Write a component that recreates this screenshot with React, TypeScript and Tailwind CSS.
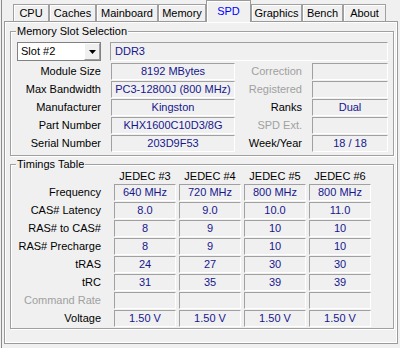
import type React from "react"

type Tab = { label: string; w: string; active?: boolean }

const tabs: Tab[] = [
  { label: "CPU", w: "w-[36px]" },
  { label: "Caches", w: "w-[47px]" },
  { label: "Mainboard", w: "w-[62px]" },
  { label: "Memory", w: "w-[48px]" },
  { label: "SPD", w: "w-[45px]", active: true },
  { label: "Graphics", w: "w-[51px]" },
  { label: "Bench", w: "w-[41px]" },
  { label: "About", w: "w-[43px]" },
]

type SlotRow = { label: string; value: string; side: string; sideOn: boolean; sideValue: string }

const slotRows: SlotRow[] = [
  { label: "Module Size", value: "8192 MBytes", side: "Correction", sideOn: false, sideValue: "" },
  { label: "Max Bandwidth", value: "PC3-12800J (800 MHz)", side: "Registered", sideOn: false, sideValue: "" },
  { label: "Manufacturer", value: "Kingston", side: "Ranks", sideOn: true, sideValue: "Dual" },
  { label: "Part Number", value: "KHX1600C10D3/8G", side: "SPD Ext.", sideOn: false, sideValue: "" },
  { label: "Serial Number", value: "203D9F53", side: "Week/Year", sideOn: true, sideValue: "18 / 18" },
]

const jedec = ["JEDEC #3", "JEDEC #4", "JEDEC #5", "JEDEC #6"]

const timings: { label: string; on: boolean; values: string[] }[] = [
  { label: "Frequency", on: true, values: ["640 MHz", "720 MHz", "800 MHz", "800 MHz"] },
  { label: "CAS# Latency", on: true, values: ["8.0", "9.0", "10.0", "11.0"] },
  { label: "RAS# to CAS#", on: true, values: ["8", "9", "10", "10"] },
  { label: "RAS# Precharge", on: true, values: ["8", "9", "10", "10"] },
  { label: "tRAS", on: true, values: ["24", "27", "30", "30"] },
  { label: "tRC", on: true, values: ["31", "35", "39", "39"] },
  { label: "Command Rate", on: false, values: ["", "", "", ""] },
  { label: "Voltage", on: true, values: ["1.50 V", "1.50 V", "1.50 V", "1.50 V"] },
]

// sunken read-only field, CPU-Z style
function Field({ children, className = "" }: { children?: React.ReactNode; className?: string }) {
  return (
    <div
      className={`h-[17px] border border-t-[#a0a0a0] border-l-[#a0a0a0] border-b-white border-r-white text-center leading-[15px] text-[#16168e] whitespace-nowrap overflow-hidden ${className}`}
    >
      {children}
    </div>
  )
}

function Group({ title, className = "", children }: { title: string; className?: string; children: React.ReactNode }) {
  return (
    <fieldset
      className={`w-[384px] border border-[#a0a0a0] shadow-[inset_1px_1px_0_#fff,1px_1px_0_#fff] pl-[6px] ${className}`}
    >
      <legend className="-ml-px px-px leading-[11px] bg-[#f0f0f0]">{title}</legend>
      {children}
    </fieldset>
  )
}

export default function App() {
  return (
    <div className="w-[400px] h-[348px] overflow-hidden bg-[#f0f0f0] font-['Liberation_Sans',Arial,sans-serif] text-[11px] text-black">
      <div className="h-full ml-px border-l border-[#8c8c8c] pl-[2px]">
        {/* Tabs */}
        <div className="flex items-end h-[21px] pl-[9px]">
          {tabs.map((t) =>
            t.active ? (
              <div
                key={t.label}
                className={`${t.w} relative z-10 h-[22px] -mb-px border border-b-0 border-[#9a9a9a] bg-[#f0f0f0] shadow-[inset_1px_1px_0_#fff] pt-[3px] text-center leading-[14px] text-[#0000ff]`}
              >
                {t.label}
              </div>
            ) : (
              <div
                key={t.label}
                className={`${t.w} h-[17px] border border-b-0 border-[#a0a0a0] bg-[#f0f0f0] shadow-[inset_1px_1px_0_#fff] pt-px text-center leading-[14px]`}
              >
                {t.label}
              </div>
            )
          )}
        </div>

        {/* Panel */}
        <div className="w-[394px] h-[323px] border border-[#9a9a9a] shadow-[inset_1px_1px_0_#fff,inset_-1px_-1px_0_#fff] pl-[5px] pt-[4px]">
          <Group title="Memory Slot Selection" className="pt-[5px] pb-[3px]">
            <div className="flex h-[19px]">
              <div className="w-[84px] h-[19px] flex border border-[#828282] bg-white">
                <div className="flex-1 pl-[3px] leading-[17px]">Slot #2</div>
                <div className="w-[16px] flex items-center justify-center bg-[#f0f0f0] border border-t-white border-l-white border-b-[#a0a0a0] border-r-[#a0a0a0]">
                  <svg width="7" height="4" viewBox="0 0 7 4">
                    <polygon points="0,0 7,0 3.5,4" fill="#000" />
                  </svg>
                </div>
              </div>
              <Field className="ml-[9px] w-[278px] h-[19px] !text-left pl-[4px] leading-[17px]">DDR3</Field>
            </div>

            <div className="mt-[2px] grid grid-cols-[94px_124px_77px_76px] gap-y-px">
              {slotRows.map((r) => (
                <div key={r.label} className="contents">
                  <div className="pr-[10px] text-right leading-[17px] whitespace-nowrap">{r.label}</div>
                  <Field>{r.value}</Field>
                  <div className={`pr-[10px] text-right leading-[17px] whitespace-nowrap ${r.sideOn ? "text-black" : "text-[#a0a0a0]"}`}>
                    {r.side}
                  </div>
                  <Field>{r.sideValue}</Field>
                </div>
              ))}
            </div>
          </Group>

          <Group title="Timings Table" className="mt-[3px] pb-px">
            <div className="grid grid-cols-[94px_62px_62px_62px_62px] gap-x-[3px] gap-y-px">
              <div className="h-[12px] mb-[1px]" />
              {jedec.map((j) => (
                <div key={j} className="h-[12px] mb-[1px] text-center leading-[12px] whitespace-nowrap">
                  {j}
                </div>
              ))}
              {timings.map((row) => (
                <div key={row.label} className="contents">
                  <div className={`pr-[10px] text-right leading-[17px] whitespace-nowrap ${row.on ? "text-black" : "text-[#a0a0a0]"}`}>
                    {row.label}
                  </div>
                  {row.values.map((v, i) => (
                    <Field key={i}>{v}</Field>
                  ))}
                </div>
              ))}
            </div>
          </Group>
        </div>
      </div>
    </div>
  )
}
